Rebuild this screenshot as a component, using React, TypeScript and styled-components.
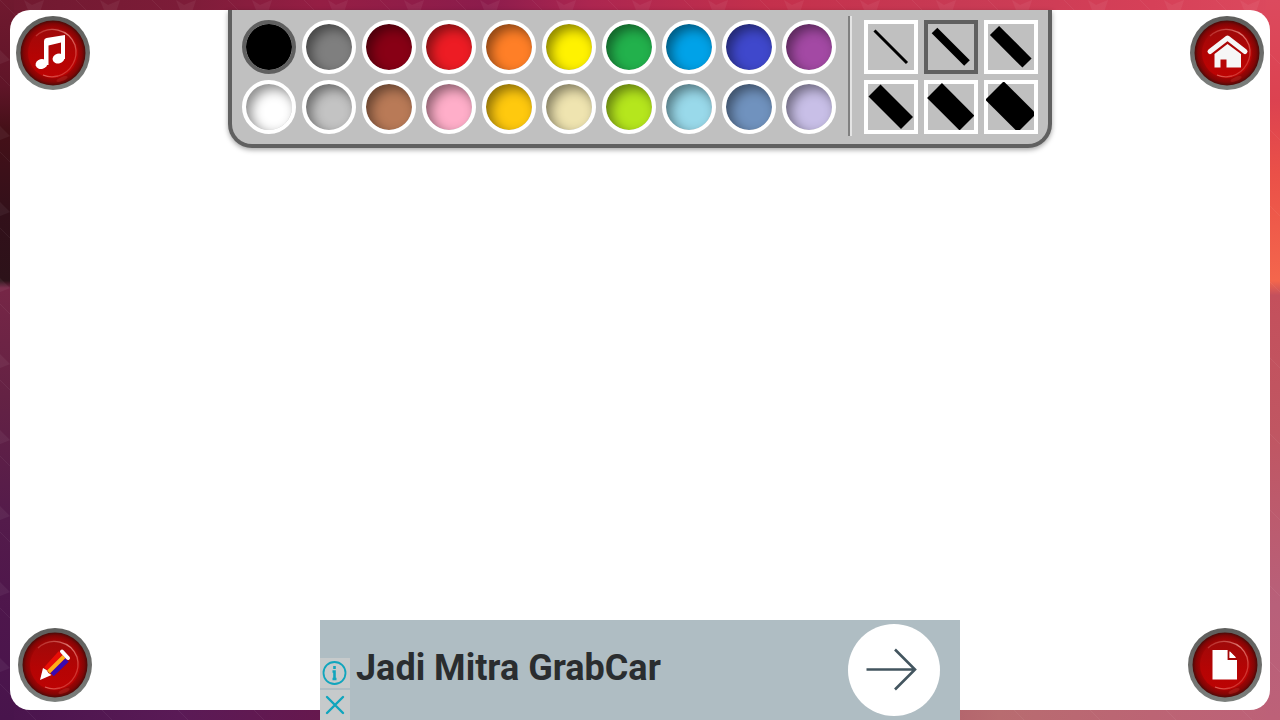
import React, { useState } from 'react';
import styled, { createGlobalStyle } from 'styled-components';

const GlobalStyle = createGlobalStyle`
  *, *::before, *::after { box-sizing: border-box; }
  body { margin: 0; font-family: Roboto, "Liberation Sans", sans-serif; }
  button { font: inherit; padding: 0; border: 0; cursor: pointer; }
`;

const Page = styled.div`
  position: relative;
  display: flex;
  min-height: 100vh;
  padding: 10px;
  background:
    linear-gradient(180deg, #70192f 0%, #5f1528 12%, #451018 18%, #32101a 30%, #2c1219 39%, #762646 40%, #642244 55%, #541b4b 72%, #4e164c 85%, #48144c 100%) left top / 14px 100% no-repeat,
    linear-gradient(180deg, #dc4a5e 0%, #dc4250 14%, #ea5048 24%, #f4664c 39%, #c4505c 41%, #c05662 60%, #b8607a 84%, #bd6178 100%) right top / 14px 100% no-repeat,
    linear-gradient(90deg, #70192f 0%, #7c1c38 14%, #951e44 25%, #8c1c4c 38%, #ac2650 46%, #c4304c 60%, #c83a54 75%, #d64058 90%, #dc4a5e 100%) left top / 100% 30px no-repeat,
    linear-gradient(90deg, #48144c 0%, #5a1a56 14%, #66184e 25%, #a04860 60%, #b86c70 78%, #bc6474 90%, #bd6178 100%) left bottom / 100% 30px no-repeat;
`;

const Texture = styled.svg`
  position: absolute;
  inset: 0;
  width: 100%;
  height: 100%;
`;

const Board = styled.main`
  position: relative;
  display: flex;
  flex: 1;
  flex-direction: column;
  justify-content: space-between;
  border-radius: 20px;
  background: #fff;
`;

const Bar = styled.div<{ $end?: boolean }>`
  display: grid;
  grid-template-columns: 1fr auto 1fr;
  align-items: ${p => (p.$end ? 'end' : 'start')};
`;

const RoundButton = styled.button<{ $right?: boolean; $bottom?: boolean }>`
  width: 74px;
  height: 74px;
  margin: ${p => (p.$bottom ? '8px' : '6px')};
  justify-self: ${p => (p.$right ? 'end' : 'start')};
  border-radius: 50%;
  background: none;

  svg { display: block; }
`;

const Toolbar = styled.div`
  display: flex;
  gap: 12px;
  padding: 6px 10px 8px;
  border: solid #606060;
  border-width: 0 4px 4px;
  border-radius: 0 0 24px 24px;
  background: #c0c0c0;
  box-shadow: 0 2px 5px rgba(0, 0, 0, 0.35);
`;

const Choices = styled.div<{ $columns: number }>`
  display: grid;
  grid-template-columns: repeat(${p => p.$columns}, 54px);
  align-content: start;
  gap: 6px;
  padding-top: 4px;
`;

const Divider = styled.div`
  width: 4px;
  min-height: 120px;
  border-left: 2px solid #808080;
  border-right: 2px solid #e4e4e4;
`;

const Swatch = styled.button<{ $color: string; $active: boolean }>`
  width: 54px;
  height: 54px;
  border: 4px solid ${p => (p.$active ? '#606060' : '#fff')};
  border-radius: 50%;
  background: ${p => p.$color};
  background-clip: padding-box;
  box-shadow: inset 5px 5px 12px rgba(0, 0, 0, 0.45);
`;

const Brush = styled.button<{ $active: boolean }>`
  width: 54px;
  height: 54px;
  padding: 2px 4px 4px 2px;
  background: #c0c0c0;
  box-shadow: inset 0 0 0 4px ${p => (p.$active ? '#606060' : '#fff')};

  svg { display: block; }
`;

const Ad = styled.aside`
  display: flex;
  align-items: flex-end;
  width: 640px;
  height: 100px;
  margin-bottom: -10px;
  background: #afbdc3;
`;

const AdTools = styled.div`
  display: flex;
  flex-direction: column;
  gap: 2px;
  width: 30px;
`;

const AdTool = styled.button`
  width: 30px;
  height: 30px;
  background: #c6cacb;

  svg { display: block; }
`;

const AdLink = styled.a`
  display: flex;
  flex: 1;
  align-items: center;
  justify-content: space-between;
  height: 100px;
  padding: 0 20px 0 6px;
  color: #2a2d2f;
  font-size: 36px;
  font-weight: 700;
  line-height: 44px;
  text-decoration: none;
`;

const AdTitle = styled.span`
  padding-bottom: 4px;
`;

const AdArrow = styled.span`
  display: flex;
  width: 92px;
  height: 92px;
  border-radius: 50%;
  background: #fff;
`;

const palette: [string, string][] = [
  ['Black', '#000000'], ['Gray', '#7f7f7f'], ['Dark red', '#880015'], ['Red', '#ed1c24'], ['Orange', '#ff7f27'],
  ['Yellow', '#fff200'], ['Green', '#22b14c'], ['Blue', '#00a2e8'], ['Indigo', '#3f48cc'], ['Purple', '#a349a4'],
  ['White', '#ffffff'], ['Light gray', '#c3c3c3'], ['Brown', '#b97a57'], ['Pink', '#ffaec9'], ['Gold', '#ffc90e'],
  ['Cream', '#efe4b0'], ['Lime', '#b5e61d'], ['Light blue', '#99d9ea'], ['Steel blue', '#7092be'], ['Lavender', '#c8bfe7'],
];

const brushes = [3, 8, 13, 17, 21, 26];

function Medallion({ id, children }: { id: string; children: React.ReactNode }) {
  return (
    <svg width="74" height="74" viewBox="0 0 74 74" aria-hidden="true">
      <defs>
        <linearGradient id={`${id}-ring`} x1="0" y1="0" x2="0" y2="1">
          <stop offset="0" stopColor="#5e5e5c" />
          <stop offset="0.5" stopColor="#6c6c6a" />
          <stop offset="1" stopColor="#7c807d" />
        </linearGradient>
        <radialGradient id={`${id}-rim`} cx="0.5" cy="0.5" r="0.5">
          <stop offset="0.78" stopColor="#9c0404" />
          <stop offset="0.9" stopColor="#820505" />
          <stop offset="1" stopColor="#4a0b08" />
        </radialGradient>
        <linearGradient id={`${id}-face`} x1="0" y1="0" x2="0" y2="1">
          <stop offset="0" stopColor="#9e0a0a" />
          <stop offset="0.55" stopColor="#b40404" />
          <stop offset="1" stopColor="#bd0303" />
        </linearGradient>
        <linearGradient id={`${id}-shine`} x1="0" y1="0" x2="1" y2="1">
          <stop offset="0" stopColor="#e07068" stopOpacity="0.3" />
          <stop offset="0.45" stopColor="#ef9a90" stopOpacity="0.8" />
          <stop offset="1" stopColor="#e04038" stopOpacity="0.4" />
        </linearGradient>
      </defs>
      <circle cx="37" cy="37" r="37" fill={`url(#${id}-ring)`} />
      <circle cx="37" cy="37" r="32.5" fill={`url(#${id}-rim)`} />
      <circle cx="37" cy="37" r="25" fill={`url(#${id}-face)`} />
      <path d="M20 20A24 24 0 0 1 59 29A25 25 0 0 1 42 60A24 24 0 0 1 27 59" fill="none" stroke={`url(#${id}-shine)`} strokeWidth="1.3" />
      <ellipse cx="46" cy="63" rx="6" ry="2" fill="#d84a40" opacity="0.25" transform="rotate(-22 46 63)" />
      {children}
    </svg>
  );
}

const MusicIcon = () => (
  <g fill="#fff">
    <path d="M28 25Q28 22.500 30.500 22L49 19V43H45V26.500L32.500 29.500V49H28Z" />
    <ellipse cx="25.500" cy="48" rx="6" ry="5" transform="rotate(-15 25.500 48)" />
    <ellipse cx="42.500" cy="42.500" rx="6" ry="5" transform="rotate(-15 42.500 42.500)" />
  </g>
);

const HomeIcon = () => (
  <g fill="#f6f6f6">
    <path d="M20 35.500L37.500 22L55 35.500" fill="none" stroke="#f6f6f6" strokeWidth="5" strokeLinecap="round" strokeLinejoin="round" />
    <path d="M24.500 38L37.500 28L51 38V51.500H36.500V43.500H30.500V51.500H24.500Z" />
  </g>
);

const PencilIcon = () => (
  <g fill="none">
    <path d="M42.500 25L28 41" stroke="#e80e08" strokeWidth="5" />
    <path d="M49 32L34 46.500" stroke="#3a08b0" strokeWidth="5" />
    <path d="M46 28.500L30.500 44" stroke="#ffae1a" strokeWidth="4" />
    <path d="M25 40L28.500 42L30.500 45L33.500 47L22 52Z" fill="#fff" />
    <path d="M44 23.500L50 30" stroke="#fff" strokeWidth="4" strokeLinecap="round" />
  </g>
);

const PageIcon = () => (
  <g>
    <path d="M24.500 22H40L49 31V51.500H24.500Z" fill="#fff" />
    <path d="M40.500 22V31H49" fill="none" stroke="#a30606" strokeWidth="1.800" />
    <path d="M42 23.500L48 29.500H42Z" fill="#fff" />
  </g>
);

export default function App() {
  const [color, setColor] = useState('Black');
  const [size, setSize] = useState(8);

  return (
    <Page>
      <GlobalStyle />
      <Texture aria-hidden="true">
        <defs>
          <pattern id="shards" width="76" height="76" patternUnits="userSpaceOnUse">
            <path d="M0 0L34 34L76 76" fill="none" stroke="#fff" strokeOpacity="0.05" />
            <path d="M24 0L32 5L44 0L40 12L28 10ZM76 50L68 56L76 62ZM0 50L10 60L0 64Z" fill="#fff" fillOpacity="0.05" />
            <path d="M20 76L34 66L50 76Z" fill="#fff" fillOpacity="0.04" />
          </pattern>
        </defs>
        <rect width="100%" height="100%" fill="url(#shards)" />
      </Texture>
      <Board>
        <Bar>
          <RoundButton aria-label="Music">
            <Medallion id="music"><MusicIcon /></Medallion>
          </RoundButton>
          <Toolbar>
            <Choices $columns={10} role="group" aria-label="Color">
              {palette.map(([name, value]) => (
                <Swatch key={name} aria-label={name} aria-pressed={color === name} $color={value} $active={color === name} onClick={() => setColor(name)} />
              ))}
            </Choices>
            <Divider />
            <Choices $columns={3} role="group" aria-label="Brush size">
              {brushes.map(width => (
                <Brush key={width} aria-label={`Brush ${width}`} aria-pressed={size === width} $active={size === width} onClick={() => setSize(width)}>
                  <svg width="48" height="48" viewBox="0 0 48 48" aria-hidden="true">
                    <path d="M8.500 8.500L41 41" stroke="#000" strokeWidth={width} />
                  </svg>
                </Brush>
              ))}
            </Choices>
          </Toolbar>
          <RoundButton $right aria-label="Home">
            <Medallion id="home"><HomeIcon /></Medallion>
          </RoundButton>
        </Bar>
        <Bar $end>
          <RoundButton $bottom aria-label="Draw">
            <Medallion id="draw"><PencilIcon /></Medallion>
          </RoundButton>
          <Ad>
            <AdTools>
              <AdTool aria-label="About this ad">
                <svg width="30" height="30" viewBox="0 0 30 30" aria-hidden="true">
                  <circle cx="14.500" cy="15" r="11" fill="none" stroke="#10a5bd" strokeWidth="1.800" />
                  <path d="M14.500 8V11M12.500 13.500H14.500V21M12.500 21H16.500" fill="none" stroke="#10a5bd" strokeWidth="2.600" />
                </svg>
              </AdTool>
              <AdTool aria-label="Close ad">
                <svg width="30" height="30" viewBox="0 0 30 30" aria-hidden="true">
                  <path d="M7 7L23 23M23 7L7 23" stroke="#10a5bd" strokeWidth="2.400" strokeLinecap="round" />
                </svg>
              </AdTool>
            </AdTools>
            <AdLink href="#grabcar">
              <AdTitle>Jadi Mitra GrabCar</AdTitle>
              <AdArrow>
                <svg width="92" height="92" viewBox="0 0 92 92" aria-hidden="true">
                  <path d="M18.500 45.500H66M47 25.500L67 45.500L47 65.500" fill="none" stroke="#43555f" strokeWidth="2.600" />
                </svg>
              </AdArrow>
            </AdLink>
          </Ad>
          <RoundButton $right $bottom aria-label="New page">
            <Medallion id="page"><PageIcon /></Medallion>
          </RoundButton>
        </Bar>
      </Board>
    </Page>
  );
}
